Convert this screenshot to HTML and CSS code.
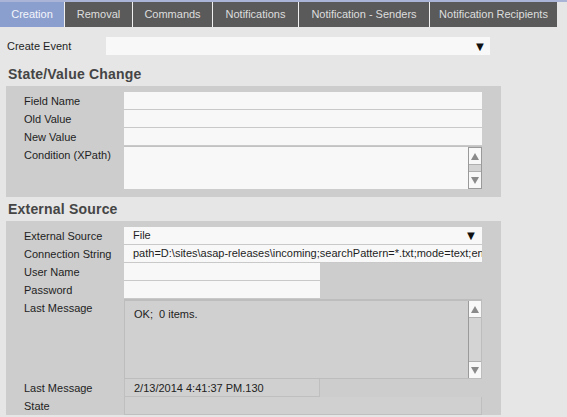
FILE: index.html
```html
<!DOCTYPE html>
<html>
<head>
<meta charset="utf-8">
<link rel="stylesheet" href="styles.css">
</head>
<body>
<div class="topline"></div>
<nav class="tabs">
  <div class="tab active t1">Creation</div>
  <div class="tab t2">Removal</div>
  <div class="tab t3">Commands</div>
  <div class="tab t4">Notifications</div>
  <div class="tab t5">Notification - Senders</div>
  <div class="tab t6">Notification Recipients</div>
</nav>
<div class="event-row">
  <span class="event-label">Create Event</span>
  <div class="select event-select"><span></span><span class="arrow">▼</span></div>
</div>

<h2 class="section-title first">State/Value Change</h2>
<div class="panel">
  <div class="row"><span class="label">Field Name</span><div class="field wide"></div></div>
  <div class="row"><span class="label">Old Value</span><div class="field wide"></div></div>
  <div class="row"><span class="label">New Value</span><div class="field wide"></div></div>
  <div class="row"><span class="label">Condition (XPath)</span>
    <div class="field wide area area-small">
      <div class="scrollbar">
        <div class="sb-btn"><span class="tri up"></span></div>
        <div class="sb-thumb small"></div>
        <div class="sb-btn"><span class="tri down"></span></div>
      </div>
    </div>
  </div>
</div>

<h2 class="section-title">External Source</h2>
<div class="panel panel-ext">
  <div class="row"><span class="label">External Source</span><div class="field wide select-field"><span>File</span><span class="arrow">▼</span></div></div>
  <div class="row"><span class="label">Connection String</span><div class="field wide text">path=D:\sites\asap-releases\incoming;searchPattern=*.txt;mode=text;encoding=utf-8</div></div>
  <div class="row"><span class="label">User Name</span><div class="field short"></div></div>
  <div class="row"><span class="label">Password</span><div class="field short"></div></div>
  <div class="row"><span class="label">Last Message</span>
    <div class="field wide area area-big disabled">
      <span class="area-text">OK;&nbsp; 0 items.</span>
      <div class="scrollbar">
        <div class="sb-btn"><span class="tri up"></span></div>
        <div class="sb-thumb big"></div>
        <div class="sb-btn"><span class="tri down"></span></div>
      </div>
    </div>
  </div>
  <div class="row"><span class="label">Last Message</span><div class="field short disabled boxed"><span>2/13/2014 4:41:37 PM.130</span></div></div>
  <div class="row"><span class="label">State</span><div class="field wide disabled boxed"></div></div>
</div>
</body>
</html>
```

FILE: styles.css
```css
* { box-sizing: border-box; }
html, body { margin: 0; padding: 0; }
body {
  background: #e6e6e6;
  font-family: "Liberation Sans", Arial, sans-serif;
  font-size: 11px;
  color: #1e1e1e;
  width: 567px;
  height: 417px;
  overflow: hidden;
}
.topline { height: 2px; background: #aab4d6; }
.tabs { display: flex; height: 25px; }
.tab {
  background: #5a5a5a;
  color: #dedede;
  font-size: 11px;
  line-height: 25px;
  text-align: center;
  border-left: 1px solid #f0f0f0;
  white-space: nowrap;
}
.tab.active { background: #8b9fcf; color: #f4f6fb; border-left: none; }
.t1 { width: 64px; }
.t2 { width: 68px; }
.t3 { width: 80px; }
.t4 { width: 86px; }
.t5 { width: 131px; }
.t6 { width: 128px; }

.event-row { display: flex; align-items: center; margin-top: 10px; height: 18px; }
.event-label { width: 106px; padding-left: 7px; }
.select {
  background: #f8f8f8;
  height: 18px;
  display: flex;
  align-items: center;
  justify-content: space-between;
}
.event-select { width: 384px; }
.arrow { font-size: 13px; line-height: 17px; color: #111; width: 20px; text-align: center; }

.section-title {
  margin: 0;
  height: 24px;
  line-height: 24px;
  padding-left: 8px;
  font-size: 14px;
  font-weight: bold;
  letter-spacing: 0.2px;
  color: #454545;
}
.section-title.first { margin-top: 7px; }
.panel {
  margin-left: 6px;
  width: 495px;
  background: #cdcdcd;
  padding: 6px 0 8px 0;
}
.panel-ext { height: 194px; padding-bottom: 0; }
.row { display: flex; }
.label { width: 118px; padding-left: 18px; line-height: 18px; }
.field {
  height: 18px;
  background: #f8f8f8;
  border-bottom: 1px solid #c9c9c9;
  line-height: 17px;
  padding-left: 9px;
  position: relative;
  white-space: nowrap;
  overflow: hidden;
}
.wide { width: 358px; }
.short { width: 196px; }
.select-field { display: flex; justify-content: space-between; }
.select-field .arrow { width: 22px; }
.text { padding-right: 0; }
.area { border-bottom: none; border-top: 1px solid #c2c2c2; }
.area-small { height: 43px; }
.area-big { height: 80px; border: 1px solid #bdbdbd; border-top: 2px solid #bdbdbd; }
.area-text { display: block; padding-top: 5px; }
.disabled { background: #d0d0d0; color: #222; }
.boxed { border: 1px solid #bfbfbf; border-top: none; line-height: 18px; }
.scrollbar {
  position: absolute;
  right: 0;
  top: 0;
  bottom: 0;
  width: 14px;
  border: 1px solid #9a9a9a;
  display: flex;
  flex-direction: column;
  background: #f8f8f8;
}
.area-big .scrollbar { top: -1px; right: -1px; bottom: -1px; }
.sb-btn { height: 16px; display: flex; align-items: center; justify-content: center; background: #f8f8f8; }
.sb-thumb { flex: 1; background: #d4d4d4; border-top: 1px solid #b0b0b0; border-bottom: 1px solid #b0b0b0; }
.tri { width: 0; height: 0; border-left: 4px solid transparent; border-right: 4px solid transparent; }
.tri.up { border-bottom: 7px solid #8a8a8a; }
.tri.down { border-top: 7px solid #8a8a8a; }
```
